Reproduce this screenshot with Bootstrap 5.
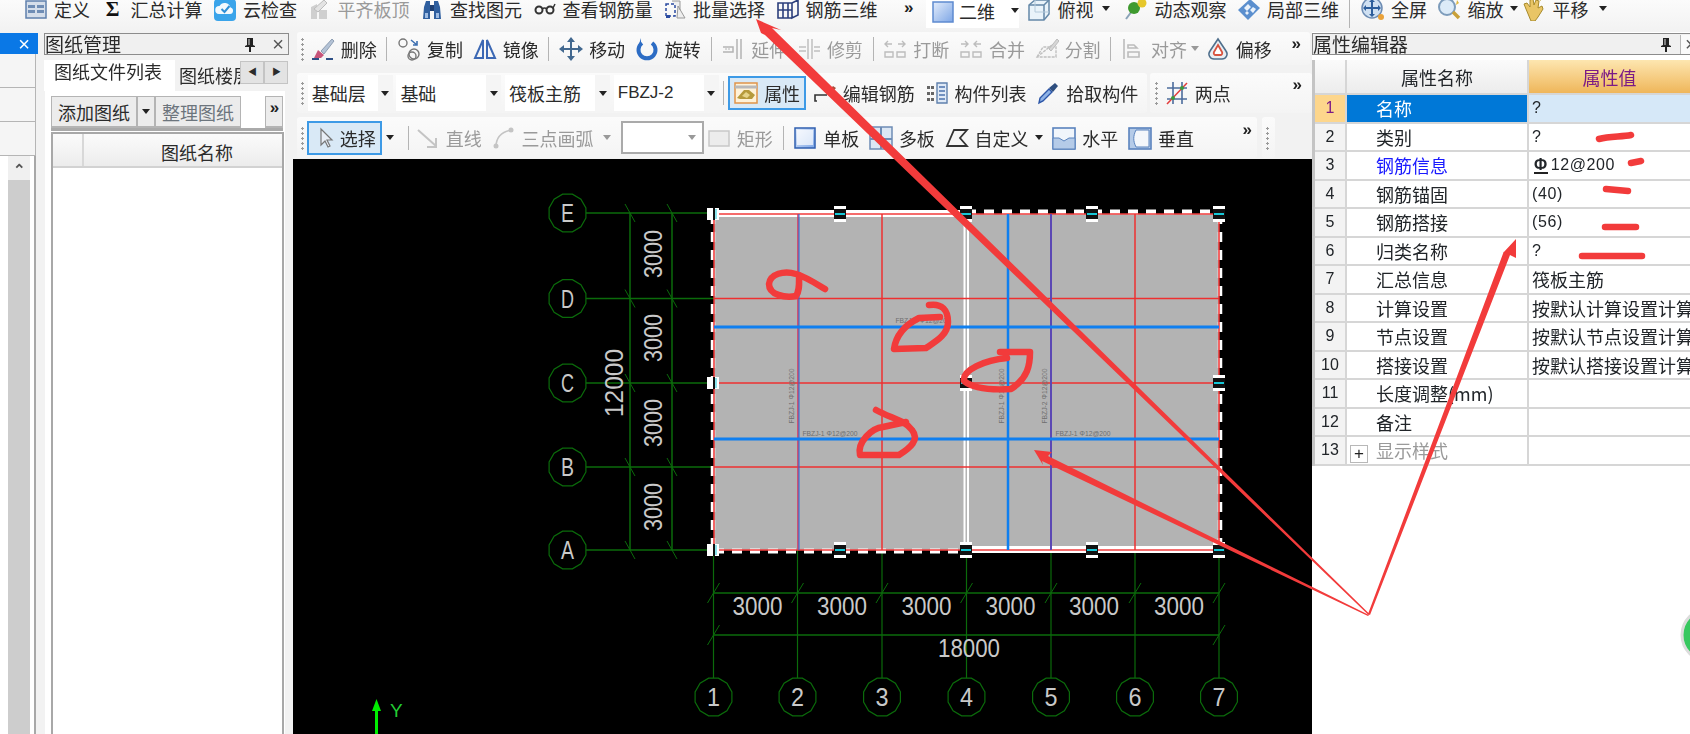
<!DOCTYPE html>
<html lang="zh-CN">
<head>
  <meta charset="UTF-8" />
  <meta name="viewport" content="width=device-width, initial-scale=1" />
  <title>属性编辑器</title>
  <link href="https://cdn.jsdelivr.net/npm/bootstrap@5.3.3/dist/css/bootstrap.min.css" rel="stylesheet" />
  <style>
    html, body { margin: 0; width: 1690px; height: 734px; overflow: hidden; background: #f2f2f2; }
    .app { position: relative; width: 1690px; height: 734px; overflow: hidden; color: #2b2b2b; filter: blur(.45px);
      font: 18px/24px "Noto Sans CJK SC", "Liberation Sans", sans-serif; }
    .app-ic { width: 24px; height: 24px; flex: none; }
    .tbi { display: flex; align-items: center; gap: 6px; white-space: nowrap; flex: none; }
    .tbi.off { color: #9a9a9a; }
    .tri { width: 0; height: 0; flex: none; border: 4.5px solid transparent; border-top: 5px solid #222; border-bottom: 0; }
    .tri.off { border-top-color: #999; }
    .tb-sep { width: 1px; height: 24px; background: #b4b4b4; flex: none; }
    .grip { width: 3px; height: 24px; flex: none; margin-right: -3px; background: radial-gradient(circle, #9a9a9a 1.2px, transparent 1.4px) 0 0 / 3px 5px; }
    .more { font: bold 17px/12px "Liberation Sans", sans-serif; letter-spacing: -1px; color: #222; flex: none; }

    /* top toolbar */
    .topbar { height: 32px; padding-left: 24px; gap: 10.5px; overflow: hidden; align-items: flex-start; background: linear-gradient(#fbfbfb, #f2f2f2); }
    .topbar > .tbi { margin-top: -3px; }
    .topbar > .tri { margin-top: 6px; }
    .topbar > .tri:last-child { margin-left: 0; }
    .topbar > .more { margin-top: 2px; }
    .topbar > .tb-sep { height: 30px; margin-top: -2px; }
    .sigma { width: 24px; text-align: center; font: bold 21px/24px "Liberation Serif", serif; color: #111; }
    .topbar > .top-combo { width: 93px; height: 28px; margin: 0 -2px 0 3px; padding: 0 0 7px 5px; background: #fff; gap: 4px; }
    .top-combo .tri { margin-left: 12px; }
    .cam-tri { margin-left: -2px; margin-right: 4px; }
    .tight-tri { margin-left: -4px; margin-right: -6px; }
    .main-row { height: 702px; }

    /* left dock strip */
    .strip { width: 38px; flex: none; display: flex; flex-direction: column; }
    .dock-blue { height: 21px; margin-top: 1px; background: #0a78e6; color: #fff; }
    .strip-gap { height: 34px; margin-right: 2px; background: #f5f5f5; border-right: 1px solid #b5b5b5; border-bottom: 1px solid #b5b5b5; }
    .strip-list { flex: 1; margin-right: 2px; background: #fff; border-right: 2px solid #a8a8a8; padding-left: 8px; }
    .strip-bar { width: 22px; height: 100%; background: #cdcdcd; }
    .strip-up { height: 24px; background: #f0f0f0; text-align: center; font: bold 15px/28px "Liberation Sans", sans-serif; color: #555; }

    /* drawing panel */
    .dwg { width: 255px; flex: none; padding-left: 6px; display: flex; flex-direction: column; }
    .dock-title { height: 22px; margin-top: 1px; border: 1.5px solid #8c8c8c; border-left-width: 1px; background: #f0f0f0; font-size: 19px; line-height: 20px; display: flex; align-items: center; }
    .dwg .dock-title { width: 245px; }
    .pin-ic { width: 12px; height: 15px; flex: none; }
    .dock-x { font: 20px/18px "Liberation Sans", sans-serif; color: #555; }
    .x-box { width: 10px; height: 19px; margin-left: 8px; border-left: 1px solid #b8b8b8; background: #fafafa; overflow: hidden; text-indent: 4px; }
    .tabs-line { height: 34px; width: 245px; display: flex; align-items: flex-end; margin-top: 2px; }
    .tab-on { width: 131px; height: 31px; background: #fff; padding-left: 10px; line-height: 23px; flex: none; }
    .tab-off { width: 61px; height: 27px; margin-left: 4px; overflow: hidden; white-space: nowrap; flex: none; line-height: 22px; }
    .tab-nav { width: 24px; height: 23px; margin-bottom: 7px; background: #e3e3e3; border: 1px solid #c4c4c4; font: 9px/21px "Liberation Sans", sans-serif; text-align: center; flex: none; }
    .dwg-body { width: 240px; flex: 1; background: #fff; margin-left: 1px; padding: 5px 0 0 6px; display: flex; flex-direction: column; }
    .dwg-tools { height: 35px; display: flex; width: 232px; border-bottom: 3px solid #aaa; margin-bottom: 1px; }
    .dwg-btn { height: 32px; background: #ececec; border: 1px solid #b4b4b4; border-width: 1px 1px 2px; text-align: center; line-height: 31px; flex: none; width: 86px; }
    .dwg-btn.narrow { width: 18px; }
    .dwg-btn.more { line-height: 22px; }
    .dwg-table { flex: 1; width: 233px; border: 2px solid #a8a8a8; border-bottom: 0; }
    .dwg-head { height: 34px; display: flex; background: linear-gradient(#fbfbfb, #ececec); border-bottom: 2px solid #d2d2d2; line-height: 36px; }
    .dwg-head-n { width: 31px; border-right: 2px solid #d8d8d8; }
    .dwg-head-t { flex: 1; padding-left: 77px; }

    /* centre */
    .center-col { width: 1019px; flex: none; display: flex; flex-direction: column; }
    .tb-row { display: flex; margin-left: 4px; }
    .tb-seg { display: flex; align-items: center; gap: 9.7px; padding-left: 4px; background: linear-gradient(#fbfbfb, #f4f4f4); border-radius: 3px; position: relative; }
    .tb-row1 { height: 33px; }
    .tb-row1 .tb-seg { width: 1013px; }
    .tb-row1 .more { margin-bottom: 10px; margin-right: 10px; }
    .tb-row1 .tri { margin-left: -2px; margin-right: -3px; }
    .tb-row2 { height: 40px; margin-top: 8px; }
    .tb-row3 { height: 41px; margin-top: 4px; }
    .seg-main { width: 960px; flex: none; }
    .seg-mini { width: 13px; margin-left: 5px; flex: none; }
    .seg-end { width: 162px; margin-left: 3px; padding-left: 5px; }
    .seg-end .more { margin-right: 11px; }
    .combo { height: 36px; display: flex; align-items: center; justify-content: space-between; padding-left: 4px; background: #fff; flex: none; white-space: nowrap; }
    .combo-box { width: 15px; height: 100%; background: #f5f5f5; display: flex; align-items: center; justify-content: center; }
    .w85 { width: 85px; margin-left: -3px; }
    .w105 { width: 105px; margin-left: -6px; }
    .latin { font-family: "Liberation Sans", sans-serif; font-size: 17px; }
    .tb-on { height: 34px; padding: 0 4px; background: #d9e9f6; border: 2px solid #3d9ae6; gap: 6px; }
    .tb-row2 .tb-sep { margin-left: -5px; }
    .tb-row2 .tb-on { margin-left: -6px; margin-right: -3px; }
    .tb-row3 .tb-on { margin-left: -4px; gap: 3px; }
    .tb-row3 .tb-on + .tri { margin-left: -5px; margin-right: 4px; }
    .tb-row3 .tri + .tb-sep { margin-right: -3px; }
    .tb-row3 .more { margin-right: 6px; }
    .sel-box { width: 83px; height: 33px; background: #fff; border: 2px solid #aaa; padding-right: 6px; margin-right: -7px; display: flex; align-items: center; justify-content: flex-end; flex: none; }
    .cad-wrap { flex: 1; min-height: 0; background: #000; margin-top: 1px; }
    .cad-wrap svg { display: block; }

    /* property panel */
    .props { flex: 1; min-width: 0; background: #fff; }
    .props .dock-title { background: #f0f0f0; border-right: 0; }
    .props-box { margin-top: 5px; border-left: 3px solid #c4c4c4; overflow: hidden; }
    .prop-table { table-layout: fixed; width: 375px; margin: 0; border-collapse: collapse; }
    .prop-table th, .prop-table td { height: 28.5px; padding: 0; border: 0; border-right: 2px solid #d6d6d6; border-bottom: 2px solid #d6d6d6; font-weight: 400; white-space: nowrap; overflow: hidden; line-height: 24px; box-shadow: none; color: inherit; background: none; vertical-align: middle; }
    .prop-table thead th { height: 34px; text-align: center; background: linear-gradient(#fbfbfb, #ececec); }
    .prop-table thead th.val-h { background: linear-gradient(#fde6b0, #efb65a); color: #7b1a86; border-right: 0; }
    .prop-table .n { background: #f3f3f3; text-align: center; font: 16px/24px "Liberation Sans", sans-serif; }
    .prop-table .nm { padding-left: 29px; }
    .prop-table .v { padding-left: 3px; border-right: 0; }
    .prop-table .v-l { font: 16px/24px "Liberation Sans", sans-serif; letter-spacing: .6px; padding-left: 3px; }
    .prop-table .n.cur { background: #fdd68c; color: #7b1a86; }
    .prop-table .nm.cur { background: #0078d7; color: #fff; }
    .prop-table .v.cur { background: #d6e8f8; }
    .prop-table .lnk { color: #1a1aff; }
    .prop-table .dim { color: #9a9a9a; padding-left: 3px; }
    .plus { display: inline-block; width: 18px; height: 18px; border: 1px solid #b8b8b8; font: 17px/16px "Liberation Sans", sans-serif; color: #222; text-align: center; margin-right: 8px; vertical-align: -1px; }
    .rebar { display: inline-block; border-bottom: 2px solid #222; font-weight: 700; line-height: 15px; margin: 0 3px 0 2px; }
    .overlay { position: absolute; left: 0; top: 0; pointer-events: none; }
  </style>
</head>
<body>
  <svg width="0" height="0" class="d-block position-absolute">
    <defs>
      <linearGradient id="gb" x1="0" y1="0" x2="1" y2="1"><stop offset="0" stop-color="#e4edfb"/><stop offset="1" stop-color="#7da6e6"/></linearGradient>
      <symbol id="i-pin" viewBox="0 0 12 15"><path d="M3 1h6v7l2 1v1H7v5H5v-5H1V9l2-1z" fill="#222"/><path d="M5 2v6" stroke="#ddd"/></symbol>
      <symbol id="i-def" viewBox="0 0 24 24"><rect x="2" y="4" width="20" height="17" fill="#d5deea" stroke="#5f80ad" stroke-width="1.5"/><path d="M4 8h7v3H4zM4 13h7v3H4zM13 8h7v3h-7zM13 13h7v3h-7z" fill="#6f8db5"/></symbol>
      <symbol id="i-cloud" viewBox="0 0 24 24"><rect x="1" y="2" width="22" height="22" rx="4" fill="#3aa4ea"/><path d="M6 17a4 4 0 0 1 .5-8 6 6 0 0 1 11 1.500 3.300 3.300 0 0 1-.5 6.500z" fill="#f4f9fd"/><path d="M8.500 12l3 3 5-6" fill="none" stroke="#2f8fd6" stroke-width="2"/></symbol>
      <symbol id="i-flush" viewBox="0 0 24 24"><path d="M3 22V10l6-3v15zM11 22V13h8v9z" fill="#cfcfcf"/><path d="M6 12l10-9 3 3-9 9z" fill="#e3e3e3" stroke="#bcbcbc"/></symbol>
      <symbol id="i-bino" viewBox="0 0 24 24"><path d="M3 22l1-12 2-6h4v18zM14 22V4h4l2 6 1 12z" fill="#2f5f9f"/><rect x="10" y="8" width="4" height="6" fill="#1d3f73"/><path d="M5 16h3v5H5zM16 16h3v5h-3z" fill="#9dbbe2"/></symbol>
      <symbol id="i-glass" viewBox="0 0 24 24"><circle cx="6" cy="13" r="3.500" fill="none" stroke="#333" stroke-width="2"/><circle cx="17" cy="13" r="3.500" fill="none" stroke="#333" stroke-width="2"/><path d="M9 12c2-1.500 3-1.500 5 0M20 11l2-4" fill="none" stroke="#333" stroke-width="1.500"/></symbol>
      <symbol id="i-batch" viewBox="0 0 24 24"><path d="M3 7h9v12H3z" fill="none" stroke="#2a4aa0" stroke-width="1.500" stroke-dasharray="3 2"/><path d="M9 4h8v9M15 9l7 12h-8z" fill="#eee" stroke="#999"/><path d="M3 18h4v3H3z" fill="#2a4aa0"/></symbol>
      <symbol id="i-r3d" viewBox="0 0 24 24"><path d="M2 6h14v15H2zM16 6l6-3v15l-6 3zM7 6v15M12 6v15M2 13h14" fill="none" stroke="#2c3f7c" stroke-width="1.600"/></symbol>
      <symbol id="i-plane" viewBox="0 0 24 24"><rect x="2" y="3" width="20" height="20" fill="url(#gb)" stroke="#5e8ad0" stroke-width="1.500"/></symbol>
      <symbol id="i-cube" viewBox="0 0 24 24"><path d="M2 8l6-5h14v14l-5 6H2z" fill="#e9f3fa" stroke="#6488a8" stroke-width="1.500"/><path d="M2 8h15v15M17 8l5-5" fill="none" stroke="#6488a8" stroke-width="1.500"/><path d="M8 3v12h14" fill="none" stroke="#b4cadb"/></symbol>
      <symbol id="i-orbit" viewBox="0 0 24 24"><path d="M2 22l6-8" stroke="#8aa3b8" stroke-width="2"/><circle cx="10" cy="11" r="6" fill="#3f9a2f"/><circle cx="18" cy="6" r="4.500" fill="#e6c72c"/></symbol>
      <symbol id="i-local" viewBox="0 0 24 24"><path d="M1 13L13 2l10 9-12 12z" fill="#5b8fce"/><path d="M7 11l4-4 3 3-4 4zM13 13l3-3 3 2-3 4zM8 16l2-2 2 2-2 2z" fill="#eaf2fb"/></symbol>
      <symbol id="i-full" viewBox="0 0 24 24"><circle cx="11" cy="11" r="10" fill="#cfe0f2" stroke="#6d8cb3" stroke-width="1.500"/><path d="M11 4v14M4 11h14" stroke="#2d5e9c" stroke-width="2"/><path d="M11 2l3 3H8zM11 20l3-3H8zM2 11l3-3v6zM20 11l-3-3v6z" fill="#2d5e9c"/><circle cx="20" cy="20" r="3" fill="#e9a23a"/></symbol>
      <symbol id="i-zoom" viewBox="0 0 24 24"><circle cx="10" cy="10" r="8" fill="#dcebf8" stroke="#7d9cbb" stroke-width="2"/><path d="M16 15l6 6" stroke="#c9a13a" stroke-width="3.500"/><path d="M20 3l2 3-3 2z" fill="#e0b83f"/></symbol>
      <symbol id="i-pan" viewBox="0 0 24 24"><path d="M4 12l-2-5 3-1 3 4V3l3-1 1 6 2-5 3 1-1 7 4-2 1 3-5 8-3 4H9z" fill="#e9c566" stroke="#a78a2c"/><path d="M15 2l3-1 1 3z" fill="#bfa23c"/></symbol>
      <symbol id="i-brush" viewBox="0 0 24 24"><path d="M10 14L21 2l2 2-10 13z" fill="#b4c3d6" stroke="#7c8ea5" stroke-width=".8"/><path d="M7 13l6 5-3 3H3z" fill="#c7557a"/><path d="M1 22h7M15 22h7" stroke="#2d4f86" stroke-width="2"/></symbol>
      <symbol id="i-copy" viewBox="0 0 24 24"><circle cx="6" cy="6" r="4" fill="none" stroke="#777" stroke-width="1.400"/><circle cx="17" cy="17" r="5" fill="none" stroke="#777" stroke-width="1.400"/><circle cx="15" cy="19" r="4" fill="none" stroke="#777" stroke-width="1.400"/><path d="M14 3l6 5M20 4v4h-4" fill="none" stroke="#3d6fb0" stroke-width="1.600"/></symbol>
      <symbol id="i-mirror" viewBox="0 0 24 24"><path d="M10 3v18H2zM14 3v18h8z" fill="none" stroke="#3c68b4" stroke-width="2"/></symbol>
      <symbol id="i-move" viewBox="0 0 24 24"><path d="M12 3v18M3 12h18" stroke="#42688f" stroke-width="2"/><path d="M12 0l4 5H8zM12 24l4-5H8zM0 12l5-4v8zM24 12l-5-4v8z" fill="#42688f"/></symbol>
      <symbol id="i-rot" viewBox="0 0 24 24"><path d="M7 6a8.500 8.500 0 1 0 10 0" fill="none" stroke="#2c6cc4" stroke-width="4"/><path d="M6 1v9H3z" fill="#2c6cc4"/></symbol>
      <symbol id="i-ext" viewBox="0 0 24 24"><path d="M16 2v20M20 2v20M2 10h10v5H2" fill="none" stroke="#b4b4b4" stroke-width="1.500"/><path d="M4 12h6" stroke="#b4b4b4" stroke-dasharray="2 1"/></symbol>
      <symbol id="i-trim" viewBox="0 0 24 24"><path d="M11 2v20M15 2v20M2 10h7M17 10h6M2 14h7M17 14h6" stroke="#c0c0c0" stroke-width="1.500"/></symbol>
      <symbol id="i-brk" viewBox="0 0 24 24"><path d="M2 15h8v5H2zM14 15h8v5h-8z" fill="none" stroke="#bdbdbd" stroke-width="1.400"/><path d="M2 7h7M22 7h-7M5 4L2 7l3 3M19 4l3 3-3 3" fill="none" stroke="#bdbdbd" stroke-width="1.400"/></symbol>
      <symbol id="i-mrg" viewBox="0 0 24 24"><path d="M2 15h8v5H2zM14 15h8v5h-8z" fill="none" stroke="#bdbdbd" stroke-width="1.400"/><path d="M2 7h7M22 7h-7M6 4l3 3-3 3M18 4l-3 3 3 3" fill="none" stroke="#bdbdbd" stroke-width="1.400"/></symbol>
      <symbol id="i-spl" viewBox="0 0 24 24"><path d="M2 20l6-10h13v10zM2 20l15-12" fill="none" stroke="#c0c0c0" stroke-width="1.400" stroke-dasharray="3 1"/><path d="M14 12L22 2l2 2-8 10z" fill="#d6d6d6" stroke="#bdbdbd"/></symbol>
      <symbol id="i-aln" viewBox="0 0 24 24"><path d="M3 2v20M7 8h6l3 3H7zM7 15h11v5H7z" fill="none" stroke="#bcbcbc" stroke-width="1.600"/></symbol>
      <symbol id="i-off" viewBox="0 0 24 24"><path d="M12 2l8 12a5 5 0 0 1-4 8H8a5 5 0 0 1-4-8z" fill="#e9eef3" stroke="#4f6f8c" stroke-width="1.600"/><path d="M12 8l4 7a2 2 0 0 1-2 3h-4a2 2 0 0 1-2-3z" fill="#fff" stroke="#d8533f" stroke-width="1.800"/></symbol>
      <symbol id="i-prop" viewBox="0 0 24 24"><rect x="1" y="2" width="22" height="20" fill="#fff2d8" stroke="#e0944a" stroke-width="1.500"/><path d="M1 6h22" stroke="#b9b9b9" stroke-width="3"/><path d="M3 17l7-8h5l6 5-3 4H6z" fill="#b69a3c"/><path d="M8 15l4-4 4 3-3 3z" fill="#e6d48a"/></symbol>
      <symbol id="i-edit" viewBox="0 0 24 24"><path d="M4 20H2v-6h12" fill="none" stroke="#333" stroke-width="1.600"/><path d="M14 12l6-7 3 2-7 8z" fill="#a8503c"/></symbol>
      <symbol id="i-list" viewBox="0 0 24 24"><path d="M12 2h10v20H12z" fill="#dfe9f6" stroke="#5f80ad" stroke-width="1.400"/><path d="M14 6h6M14 10h6M14 14h6M14 18h6" stroke="#4d73ad" stroke-width="1.400"/><path d="M2 5h3v3H2zM6 5h3v3H6zM2 11h3v3H2zM6 11h3v3H6zM2 17h3v3H2zM6 17h3v3H6z" fill="#666"/></symbol>
      <symbol id="i-drop" viewBox="0 0 24 24"><path d="M3 22l1-5 9-9 3 3-9 9z" fill="#8fb3e6" stroke="#2c56a8" stroke-width="1.400"/><path d="M13 7l6-5 3 3-5 6z" fill="#2f4f7f"/></symbol>
      <symbol id="i-two" viewBox="0 0 24 24"><path d="M2 7h20M2 18h20M8 1v22M17 1v22" stroke="#4c6c9c" stroke-width="1.600"/><path d="M2 23L22 2" stroke="#e23c3c" stroke-width="1.500"/><circle cx="8" cy="17" r="2" fill="#3d9a3d"/><circle cx="17" cy="7" r="2" fill="#3d9a3d"/></symbol>
      <symbol id="i-cur" viewBox="0 0 24 24"><path d="M8 3v16l4-4 3 6 2-1-3-6h5z" fill="#e8eef6" stroke="#777" stroke-width="1.200"/></symbol>
      <symbol id="i-line" viewBox="0 0 24 24"><path d="M2 4l18 16" stroke="#c4c4c4" stroke-width="2"/><path d="M20 12v9h-9" fill="none" stroke="#c4c4c4" stroke-width="2"/></symbol>
      <symbol id="i-arc" viewBox="0 0 24 24"><path d="M5 21C5 12 10 6 20 4" fill="none" stroke="#c4c4c4" stroke-width="1.600"/><circle cx="5" cy="20" r="2.500" fill="#c4c4c4"/><circle cx="20" cy="4" r="2.500" fill="#c4c4c4"/></symbol>
      <symbol id="i-rect" viewBox="0 0 24 24"><rect x="2" y="5" width="20" height="15" fill="#ececec" stroke="#c8c8c8" stroke-width="1.500"/></symbol>
      <symbol id="i-slab" viewBox="0 0 24 24"><rect x="2" y="2" width="20" height="20" fill="url(#gb)" stroke="#2f5fb0" stroke-width="1.500"/><rect x="4" y="4" width="16" height="15" fill="#fff" opacity=".7"/></symbol>
      <symbol id="i-multi" viewBox="0 0 24 24"><rect x="1" y="1" width="22" height="22" fill="#dce7f4" stroke="#6e8cb5" stroke-width="1.500"/><path d="M12 1v22M1 13h22" stroke="#6e8cb5" stroke-width="2"/></symbol>
      <symbol id="i-cust" viewBox="0 0 24 24"><path d="M2 20L9 4h13l-7 8 7 8z" fill="#f6f6f6" stroke="#333" stroke-width="1.800"/></symbol>
      <symbol id="i-hor" viewBox="0 0 24 24"><rect x="1" y="2" width="22" height="21" fill="#f0f5fb" stroke="#5a83bd" stroke-width="1.600"/><path d="M1 12h6l5 3 5-3h6v11H1z" fill="#b5cbe8" stroke="#5a83bd"/></symbol>
      <symbol id="i-ver" viewBox="0 0 24 24"><rect x="1" y="2" width="22" height="21" fill="#b5cbe8" stroke="#5a83bd" stroke-width="1.600"/><path d="M8 4c-3 6-3 11 0 17h13V4z" fill="#f4f7fb" stroke="#5a83bd"/></symbol>
    </defs>
  </svg>

  <div class="app">
    <div class="topbar d-flex">
      <span class="tbi"><svg class="app-ic"><use href="#i-def"/></svg>定义</span>
      <span class="tbi"><span class="sigma">Σ</span>汇总计算</span>
      <span class="tbi"><svg class="app-ic"><use href="#i-cloud"/></svg>云检查</span>
      <span class="tbi off"><svg class="app-ic"><use href="#i-flush"/></svg>平齐板顶</span>
      <span class="tbi"><svg class="app-ic"><use href="#i-bino"/></svg>查找图元</span>
      <span class="tbi"><svg class="app-ic"><use href="#i-glass"/></svg>查看钢筋量</span>
      <span class="tbi"><svg class="app-ic"><use href="#i-batch"/></svg>批量选择</span>
      <span class="tbi"><svg class="app-ic"><use href="#i-r3d"/></svg>钢筋三维</span>
      <span class="more ms-3">»</span>
      <span class="tbi top-combo"><svg class="app-ic"><use href="#i-plane"/></svg>二维<span class="tri"></span></span>
      <span class="tbi"><svg class="app-ic"><use href="#i-cube"/></svg>俯视</span>
      <span class="tri cam-tri"></span>
      <span class="tbi"><svg class="app-ic"><use href="#i-orbit"/></svg>动态观察</span>
      <span class="tbi"><svg class="app-ic"><use href="#i-local"/></svg>局部三维</span>
      <span class="tb-sep"></span>
      <span class="tbi"><svg class="app-ic"><use href="#i-full"/></svg>全屏</span>
      <span class="tbi"><svg class="app-ic"><use href="#i-zoom"/></svg>缩放</span>
      <span class="tri tight-tri"></span>
      <span class="tbi"><svg class="app-ic"><use href="#i-pan"/></svg>平移</span>
      <span class="tri tight-tri"></span>
    </div>

    <div class="main-row d-flex">
      <aside class="strip">
        <div class="dock-blue d-flex align-items-center justify-content-end pe-2"><span class="dock-x text-white">×</span></div>
        <div class="strip-gap"></div>
        <div class="strip-gap"></div>
        <div class="strip-gap"></div>
        <div class="strip-list"><div class="strip-bar"><div class="strip-up">⌃</div></div></div>
      </aside>

      <aside class="dwg">
        <div class="dock-title">图纸管理<svg class="pin-ic ms-auto me-3"><use href="#i-pin"/></svg><span class="dock-x me-1">×</span></div>
        <div class="tabs-line">
          <span class="tab-on">图纸文件列表</span>
          <span class="tab-off">图纸楼层</span>
          <span class="tab-nav">◀</span><span class="tab-nav">▶</span>
        </div>
        <div class="dwg-body">
          <div class="dwg-tools">
            <span class="dwg-btn">添加图纸</span>
            <span class="dwg-btn narrow d-flex align-items-center justify-content-center"><span class="tri"></span></span>
            <span class="dwg-btn text-secondary">整理图纸</span>
            <span class="more dwg-btn narrow ms-auto">»</span>
          </div>
          <div class="dwg-table">
            <div class="dwg-head"><span class="dwg-head-n"></span><span class="dwg-head-t">图纸名称</span></div>
          </div>
        </div>
      </aside>

      <main class="center-col">
        <div class="tb-row tb-row1">
          <div class="tb-seg">
            <span class="grip"></span>
            <span class="tbi"><svg class="app-ic"><use href="#i-brush"/></svg>删除</span>
            <span class="tb-sep"></span>
            <span class="tbi"><svg class="app-ic"><use href="#i-copy"/></svg>复制</span>
            <span class="tbi"><svg class="app-ic"><use href="#i-mirror"/></svg>镜像</span>
            <span class="tb-sep"></span>
            <span class="tbi"><svg class="app-ic"><use href="#i-move"/></svg>移动</span>
            <span class="tbi"><svg class="app-ic"><use href="#i-rot"/></svg>旋转</span>
            <span class="tb-sep"></span>
            <span class="tbi off"><svg class="app-ic"><use href="#i-ext"/></svg>延伸</span>
            <span class="tbi off"><svg class="app-ic"><use href="#i-trim"/></svg>修剪</span>
            <span class="tb-sep"></span>
            <span class="tbi off"><svg class="app-ic"><use href="#i-brk"/></svg>打断</span>
            <span class="tbi off"><svg class="app-ic"><use href="#i-mrg"/></svg>合并</span>
            <span class="tbi off"><svg class="app-ic"><use href="#i-spl"/></svg>分割</span>
            <span class="tb-sep"></span>
            <span class="tbi off"><svg class="app-ic"><use href="#i-aln"/></svg>对齐<span class="tri off"></span></span>
            <span class="tbi"><svg class="app-ic"><use href="#i-off"/></svg>偏移</span>
            <span class="more ms-auto">»</span>
          </div>
        </div>

        <div class="tb-row tb-row2">
          <div class="tb-seg flex-grow-1">
            <span class="grip"></span>
            <span class="combo w85">基础层<span class="combo-box"><span class="tri"></span></span></span>
            <span class="combo w105">基础<span class="combo-box"><span class="tri"></span></span></span>
            <span class="combo w105">筏板主筋<span class="combo-box"><span class="tri"></span></span></span>
            <span class="combo w105 latin">FBZJ-2<span class="combo-box"><span class="tri"></span></span></span>
            <span class="tb-sep"></span>
            <span class="tbi tb-on"><svg class="app-ic"><use href="#i-prop"/></svg>属性</span>
            <span class="tbi"><svg class="app-ic"><use href="#i-edit"/></svg>编辑钢筋</span>
            <span class="tbi"><svg class="app-ic"><use href="#i-list"/></svg>构件列表</span>
            <span class="tbi"><svg class="app-ic"><use href="#i-drop"/></svg>拾取构件</span>
          </div>
          <div class="tb-seg seg-end">
            <span class="grip"></span>
            <span class="tbi"><svg class="app-ic"><use href="#i-two"/></svg>两点</span>
            <span class="more ms-auto mb-3">»</span>
          </div>
        </div>

        <div class="tb-row tb-row3">
          <div class="tb-seg seg-main">
            <span class="grip"></span>
            <span class="tbi tb-on"><svg class="app-ic"><use href="#i-cur"/></svg>选择</span>
            <span class="tri"></span>
            <span class="tb-sep"></span>
            <span class="tbi off"><svg class="app-ic"><use href="#i-line"/></svg>直线</span>
            <span class="tbi off"><svg class="app-ic"><use href="#i-arc"/></svg>三点画弧<span class="tri off ms-1"></span></span>
            <span class="sel-box"><span class="tri off"></span></span>
            <span class="tbi off"><svg class="app-ic"><use href="#i-rect"/></svg>矩形</span>
            <span class="tb-sep"></span>
            <span class="tbi"><svg class="app-ic"><use href="#i-slab"/></svg>单板</span>
            <span class="tbi"><svg class="app-ic"><use href="#i-multi"/></svg>多板</span>
            <span class="tbi"><svg class="app-ic"><use href="#i-cust"/></svg>自定义<span class="tri"></span></span>
            <span class="tbi"><svg class="app-ic"><use href="#i-hor"/></svg>水平</span>
            <span class="tbi"><svg class="app-ic"><use href="#i-ver"/></svg>垂直</span>
            <span class="more ms-auto mb-3">»</span>
          </div>
          <div class="tb-seg seg-mini"><span class="grip"></span></div>
        </div>

        <div class="cad-wrap">
          <svg id="cad" width="1019" height="575" viewBox="293 159 1019 575" font-family="Liberation Sans, sans-serif"></svg>
        </div>
      </main>

      <aside class="props">
        <div class="dock-title">属性编辑器<svg class="pin-ic ms-auto"><use href="#i-pin"/></svg><span class="dock-x x-box">×</span></div>
        <div class="props-box">
          <table class="table prop-table">
            <colgroup><col width="31"><col width="182"><col></colgroup>
            <thead><tr><th></th><th>属性名称</th><th class="val-h">属性值</th></tr></thead>
            <tbody id="propRows"></tbody>
          </table>
        </div>
      </aside>
    </div>

    <svg class="overlay" width="1690" height="734" viewBox="0 0 1690 734">
      <g fill="#f23b3b">
        <path d="M756 19L781 30 772 28 1369.500 614 1368.500 615 765 35 761 33Z"/>
        <path d="M1516 239L1516 258 1510 255 1370 615 1368 614 1504 251 1503 253Z"/>
        <path d="M1034 450L1052 452 1048 456 1369 615 1368 616 1042 461 1043 465Z"/>
      </g>
      <g fill="none" stroke="#f23b3b" stroke-width="6.500" stroke-linecap="round" stroke-linejoin="round">
        <path d="M825 289C815 283 806 277 796 274C784 270 770 274 769 284C769 295 785 298 796 296C800 290 799 283 799 275"/>
        <path d="M929 305C942 303 948 310 948 322C948 335 935 342 926 348L894 349C896 335 905 325 919 318L940 317"/>
        <path d="M1000 352H1030C1030 365 1028 378 1011 389C995 390 975 390 964 381C962 370 985 360 1007 358"/>
        <path d="M876 410C890 418 905 420 912 430C920 440 910 448 899 455L860 455C857 442 872 428 883 427L906 422"/>
        <path d="M1599 139C1610 136 1622 137 1631 135"/>
        <path d="M1631 163L1641 161"/>
        <path d="M1606 189L1628 191"/>
        <path d="M1605 227H1636"/>
        <path d="M1582 256H1642"/>
      </g>
      <circle cx="1708" cy="635" r="26" fill="#37c85f" stroke="#dcdcdc" stroke-width="3"/>
    </svg>
  </div>

  <script src="https://cdn.jsdelivr.net/npm/bootstrap@5.3.3/dist/js/bootstrap.bundle.min.js"></script>
  <script>
    const rows = [
      ["名称", "?"], ["类别", "?"], ["钢筋信息", '<span class="rebar">Φ</span>12@200', "lnk"], ["钢筋锚固", "(40)"],
      ["钢筋搭接", "(56)"], ["归类名称", "?"], ["汇总信息", "筏板主筋"], ["计算设置", "按默认计算设置计算"],
      ["节点设置", "按默认节点设置计算"], ["搭接设置", "按默认搭接设置计算"], ["长度调整(mm)", ""], ["备注", ""],
      ["显示样式", "", "dim"]
    ];
    document.getElementById("propRows").innerHTML = rows.map((r, i) => {
      const cur = i === 0 ? " cur" : "";
      const latin = /^[?(<]/.test(r[1]) ? " v-l" : "";
      const plus = r[2] === "dim" ? '<span class="plus">+</span>' : "";
      return `<tr><td class="n${cur}">${i + 1}</td><td class="nm${cur} ${r[2] || ""}">${plus}${r[0]}</td><td class="v${cur}${latin}">${r[1]}</td></tr>`;
    }).join("");

    // CAD drawing, page coordinates
    const xs = [713.5, 797.5, 882, 966.5, 1051, 1135, 1219];
    const ys = [213, 298.5, 383, 467, 550];
    const green = "#0b6b0b", txt = "#c9c9c9";
    let s = "";
    const line = (x1, y1, x2, y2, c, w, extra = "") => `<line x1="${x1}" y1="${y1}" x2="${x2}" y2="${y2}" stroke="${c}" stroke-width="${w}" ${extra}/>`;
    const bubble = (cx, cy, label) => {
      const pts = [];
      for (let i = 0; i < 12; i++) {
        const a = i * Math.PI / 6 + Math.PI / 12;
        pts.push((cx + 19 * Math.cos(a)).toFixed(1) + "," + (cy + 19.5 * Math.sin(a)).toFixed(1));
      }
      return `<polygon points="${pts.join(" ")}" fill="#000" stroke="${green}" stroke-width="1.200"/>` +
        `<text x="${cx}" y="${cy + 9}" font-size="25" fill="${txt}" text-anchor="middle" textLength="13" lengthAdjust="spacingAndGlyphs">${label}</text>`;
    };
    const dimText = (x, y, t, w, rot) => `<text x="${x}" y="${y}" font-size="26" fill="${txt}" text-anchor="middle" textLength="${w}" lengthAdjust="spacingAndGlyphs"${rot ? ` transform="rotate(-90 ${x} ${y})"` : ""}>${t}</text>`;

    // axes and dimensions
    ys.forEach((y, i) => {
      s += line(586, y, 714, y, green, 1.5);
      [630, 672].forEach(x => s += line(x - 5, y - 9, x + 5, y + 9, green, 1));
      s += bubble(567.5, y, "EDCBA"[i]);
    });
    s += line(630, 213, 630, 550, green, 1.5) + line(672, 213, 672, 550, green, 1.5);
    xs.forEach((x, i) => {
      s += line(x, 550, x, 678, green, 1.2);
      [593, 635].forEach(y => { if (y === 593 || i === 0 || i === 6) s += line(x - 6, y + 10, x + 6, y - 10, green, 1); });
      s += bubble(x, 697, i + 1);
    });
    s += line(713, 593, 1219, 593, green, 1.5) + line(713, 635, 1219, 635, green, 1.5);
    [254, 338, 423, 507].forEach(y => s += dimText(662, y, "3000", 48, true));
    s += dimText(623, 383, "12000", 68, true);
    [757.5, 842, 926.5, 1010.5, 1094, 1179].forEach(x => s += dimText(x, 615, "3000", 50));
    s += dimText(969, 657, "18000", 62);

    // slab
    s += `<rect x="714" y="214" width="505" height="336" fill="#b3b3b3"/>`;

    // selection outlines go under the rebar lines
    const dash = 'stroke-dasharray="10 8"';
    s += `<rect x="712" y="210" width="254" height="7" fill="#fff"/><rect x="966" y="546" width="253" height="7" fill="#fff"/>`;
    s += line(964.5, 213, 964.5, 550, "#fff", 2) + line(968, 213, 968, 550, "#fff", 2);
    s += line(966, 212, 1219, 212, "#fff", 5, dash) + line(714, 551, 966, 551, "#fff", 5, dash);
    s += line(713, 214, 713, 550, "#fff", 4.5, dash) + line(1220, 214, 1220, 550, "#fff", 4.5, dash);

    s += line(714, 214, 1219, 214, "#f23b3b", 1.5) + line(714, 550, 1219, 550, "#f23b3b", 1.5);
    [298.5, 383, 467].forEach(y => s += line(714, y, 1219, y, "#ee3030", 1.5));
    [714, 882, 1135, 1219].forEach(x => s += line(x, 214, x, 550, "#ee3030", 1.5));
    s += line(798, 214, 798, 550, "#d9345a", 1.5) + line(799, 214, 799, 550, "#1f6fe0", 1);
    s += line(1051, 214, 1051, 550, "#5b48b4", 2);
    s += line(1008, 214, 1008, 550, "#0f7ff0", 2.5);
    [327, 439].forEach(y => s += line(714, y, 1219, y, "#0f7ff0", 3));

    // rebar labels on the slab
    const tiny = (x, y, t, w, rot) => `<text x="${x}" y="${y}" font-size="7" fill="#6f6f6f" text-anchor="middle" textLength="${w}" lengthAdjust="spacingAndGlyphs"${rot ? ` transform="rotate(-90 ${x} ${y})"` : ""}>${t}</text>`;
    s += tiny(923, 323, "FBZJ-1 Φ12@200", 55) + tiny(830, 436, "FBZJ-1 Φ12@200", 55) + tiny(1083, 436, "FBZJ-1 Φ12@200", 55);
    s += tiny(794, 396, "FBZJ-1 Φ12@200", 55, true) + tiny(1004, 396, "FBZJ-1 Φ12@200", 55, true) + tiny(1047, 396, "FBZJ-2 Φ12@200", 55, true);

    // grips: corners are white, edge midpoints black with a cyan bar
    const corner = (x, y) => `<rect x="${x - 6}" y="${y - 6}" width="12" height="12" fill="#fff"/><path d="M${x + 1} ${y - 6}v12" stroke="#111" stroke-width="2"/><path d="M${x + 3} ${y - 5}v10" stroke="#16c8d8" stroke-width="1"/>`;
    const mid = (x, y) => `<rect x="${x - 6}" y="${y - 8}" width="12" height="16" fill="#fff"/><rect x="${x - 6}" y="${y - 5}" width="12" height="10" fill="#111"/><path d="M${x - 5} ${y}h10" stroke="#16c8d8" stroke-width="2"/>`;
    [[713, 214], [713, 383], [713, 550]].forEach(g => s += corner(g[0], g[1]));
    [[840, 214], [840, 550], [966, 214], [966, 550], [966, 383], [1092, 214], [1092, 550], [1219, 214], [1219, 383], [1219, 550]].forEach(g => s += mid(g[0], g[1]));

    // UCS marker
    s += `<path d="M375 734V711H372L376.500 699 381 711H378V734Z" fill="#00ee00"/>`;
    s += `<text x="390" y="717" font-size="19" fill="#22cc33">Y</text>`;
    document.getElementById("cad").innerHTML = s;
  </script>
</body>
</html>
